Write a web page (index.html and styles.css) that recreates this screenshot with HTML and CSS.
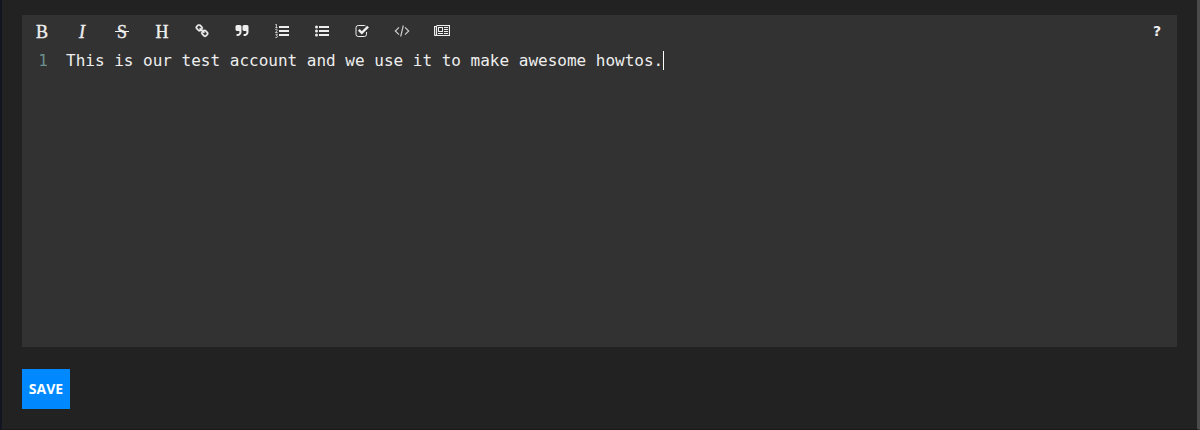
FILE: index.html
```
<!DOCTYPE html>
<html lang="en">
<head>
<meta charset="utf-8">
<title>Edit text</title>
<link rel="stylesheet" href="styles.css">
</head>
<body>
<main class="panel">
  <form class="form">
    <section class="editor">
      <div class="toolbar" role="toolbar" aria-label="Formatting">
        <button type="button" class="tool tool-letter tool-bold" aria-label="Bold">B</button>
        <button type="button" class="tool tool-letter tool-italic" aria-label="Italic">I</button>
        <button type="button" class="tool tool-letter" aria-label="Strikethrough"><span class="strike">S</span></button>
        <button type="button" class="tool tool-letter" aria-label="Heading">H</button>
        <button type="button" class="tool" aria-label="Link">
          <svg class="icon icon-link" viewBox="0 0 1792 1792"><path d="M1520 1216q0-40-28-68l-208-208q-28-28-68-28-42 0-72 32 3 3 19 18.500t21.500 21.500 15 19 13 25.500 3.500 27.500q0 40-28 68t-68 28q-15 0-27.500-3.500t-25.500-13-19-15-21.500-21.500-18.500-19q-33 31-33 73 0 40 28 68l206 207q27 27 68 27 40 0 68-26l147-146q28-28 28-67zm-703-705q0-40-28-68l-206-207q-28-28-68-28-39 0-68 27l-147 146q-28 28-28 67 0 40 28 68l208 208q27 27 68 27 42 0 72-31-3-3-19-18.500t-21.500-21.500-15-19-13-25.500-3.500-27.500q0-40 28-68t68-28q15 0 27.500 3.500t25.500 13 19 15 21.500 21.500 18.500 19q33-31 33-73zm895 705q0 120-85 203l-147 146q-83 83-203 83-121 0-204-85l-206-207q-83-83-83-203 0-123 88-209l-88-88q-86 88-208 88-120 0-204-84l-208-208q-84-84-84-204t85-203l147-146q83-83 203-83 121 0 204 85l206 207q83 83 83 203 0 123-88 209l88 88q86-88 208-88 120 0 204 84l208 208q84 84 84 204z"/></svg>
        </button>
        <button type="button" class="tool" aria-label="Quote">
          <svg class="icon" viewBox="0 0 1792 1792"><path d="M832 320v704q0 104-40.500 198.500t-109.500 163.500-163.500 109.500-198.500 40.500h-64q-26 0-45-19t-19-45v-128q0-26 19-45t45-19h64q106 0 181-75t75-181v-32q0-40-28-68t-68-28h-224q-80 0-136-56t-56-136v-384q0-80 56-136t136-56h384q80 0 136 56t56 136zm896 0v704q0 104-40.500 198.500t-109.500 163.500-163.500 109.500-198.500 40.500h-64q-26 0-45-19t-19-45v-128q0-26 19-45t45-19h64q106 0 181-75t75-181v-32q0-40-28-68t-68-28h-224q-80 0-136-56t-56-136v-384q0-80 56-136t136-56h384q80 0 136 56t56 136z"/></svg>
        </button>
        <button type="button" class="tool" aria-label="Numbered list">
          <svg class="icon" viewBox="0 0 14 14"><path d="M4 2h10v2H4zM4 6h10v2H4zM4 10h10v2H4z"/><path class="line thin" d="M.3.7 1.400.2v3.300M.3 3.600h2.300M.3 5.600q.9-.8 1.700-.2t-.2 1.600L.4 8.500h2.200M.4 10.300h2l-1 1.300q1.300 0 1.100 1.100t-2.200.7"/></svg>
        </button>
        <button type="button" class="tool" aria-label="Bulleted list">
          <svg class="icon" viewBox="0 0 14 14"><circle cx="1.500" cy="3" r="1.500"/><circle cx="1.500" cy="7" r="1.500"/><circle cx="1.500" cy="11" r="1.500"/><path d="M4 2h10v2H4zM4 6h10v2H4zM4 10h10v2H4z"/></svg>
        </button>
        <button type="button" class="tool" aria-label="Checklist">
          <svg class="icon" viewBox="0 0 14 14"><path class="line" d="M11.500 8v2.300a2.200 2.200 0 0 1-2.200 2.200H3.200A2.200 2.200 0 0 1 1 10.300V3.700a2.200 2.200 0 0 1 2.200-2.200h6.100q.7 0 1.200.3"/><path class="line thick" d="M3.800 5.900 6.800 8.900 13.100 2.600"/></svg>
        </button>
        <button type="button" class="tool" aria-label="Code">
          <svg class="icon icon-wide icon-code" viewBox="0 0 16 14"><path class="line medium" d="M5 3.300 1.300 7 5 10.700M11 3.300 14.700 7 11 10.700M9.300 1.500 6.700 12.500"/></svg>
        </button>
        <button type="button" class="tool" aria-label="Preview">
          <svg class="icon icon-wide" viewBox="0 0 16 14"><path class="line medium" d="M2.500 1.500h13v10h-14q-1 0-1-1v-8h2v8q0 1-1 1"/><path fill-rule="evenodd" d="M4 3h5v5H4zM5 4v3h3V4zM10 3h4v1h-4zM10 5h4v1h-4zM10 7h4v1h-4zM4 9h5v1H4zM10 9h4v1h-4z"/></svg>
        </button>
        <button type="button" class="tool tool-help" aria-label="Help">?</button>
      </div>
      <div class="document">
        <span class="gutter" aria-hidden="true">1</span>
        <div class="code">
          <textarea class="input" aria-label="Text" spellcheck="false">This is our test account and we use it to make awesome howtos.</textarea>
          <span class="caret"></span>
        </div>
      </div>
    </section>
    <button type="button" class="save">SAVE</button>
  </form>
</main>
</body>
</html>
```
FILE: styles.css
```
* {
  box-sizing: border-box;
}

body {
  margin: 0;
  background: #222;
}

.panel {
  min-height: 100vh;
  padding: 15px 20px 20px;
  border-left: 2px solid #12141f;
  border-right: 3px solid #4b4b4b;
  border-bottom: 1px solid #1d171b;
}

.form {
  display: flex;
  flex-direction: column;
  align-items: flex-start;
  gap: 22px;
}

.editor {
  align-self: stretch;
  background: #323232;
}

.toolbar {
  display: flex;
  height: 32px;
}

.tool {
  display: flex;
  align-items: center;
  justify-content: center;
  width: 40px;
  padding: 0;
  border: 0;
  background: none;
  color: #eee;
}

.tool-letter {
  padding-top: 2px;
  font: 18px/30px "Liberation Serif", serif;
  -webkit-text-stroke: 0.4px #eee;
}

.tool-italic {
  font-style: italic;
}

.strike {
  position: relative;
}

.strike::after {
  content: "";
  position: absolute;
  top: 14px;
  left: -2px;
  right: -2px;
  height: 1px;
  background: #eee;
}

.tool-help {
  margin-left: auto;
  font: bold 14px/32px "DejaVu Sans", sans-serif;
}

.icon {
  width: 14px;
  height: 14px;
  fill: currentColor;
}

.icon-wide {
  width: 16px;
}

.icon-link {
  stroke: currentColor;
  stroke-width: 50;
}

.icon-code {
  color: #ccc;
}

.line {
  fill: none;
  stroke: currentColor;
}

.thin {
  stroke-width: 0.8;
}

.medium {
  stroke-width: 1.2;
}

.thick {
  stroke-width: 2.4;
}

.document {
  display: flex;
  gap: 18px;
  font: 16px/28px "DejaVu Sans Mono", monospace;
}

.gutter {
  width: 26px;
  color: #6b8f8c;
  text-align: right;
}

.code {
  position: relative;
  flex: 1;
}

.input {
  display: block;
  width: 100%;
  height: 300px;
  padding: 0;
  border: 0;
  outline: 0;
  resize: none;
  background: none;
  color: #eee;
  font: inherit;
}

.caret {
  position: absolute;
  top: 4px;
  left: 62ch;
  width: 1px;
  height: 19px;
  background: #fff;
}

.save {
  width: 48px;
  height: 40px;
  padding: 0;
  border: 0;
  background: #08f;
  color: #fff;
  font: bold 14px/20px "Open Sans", sans-serif;
}
```
